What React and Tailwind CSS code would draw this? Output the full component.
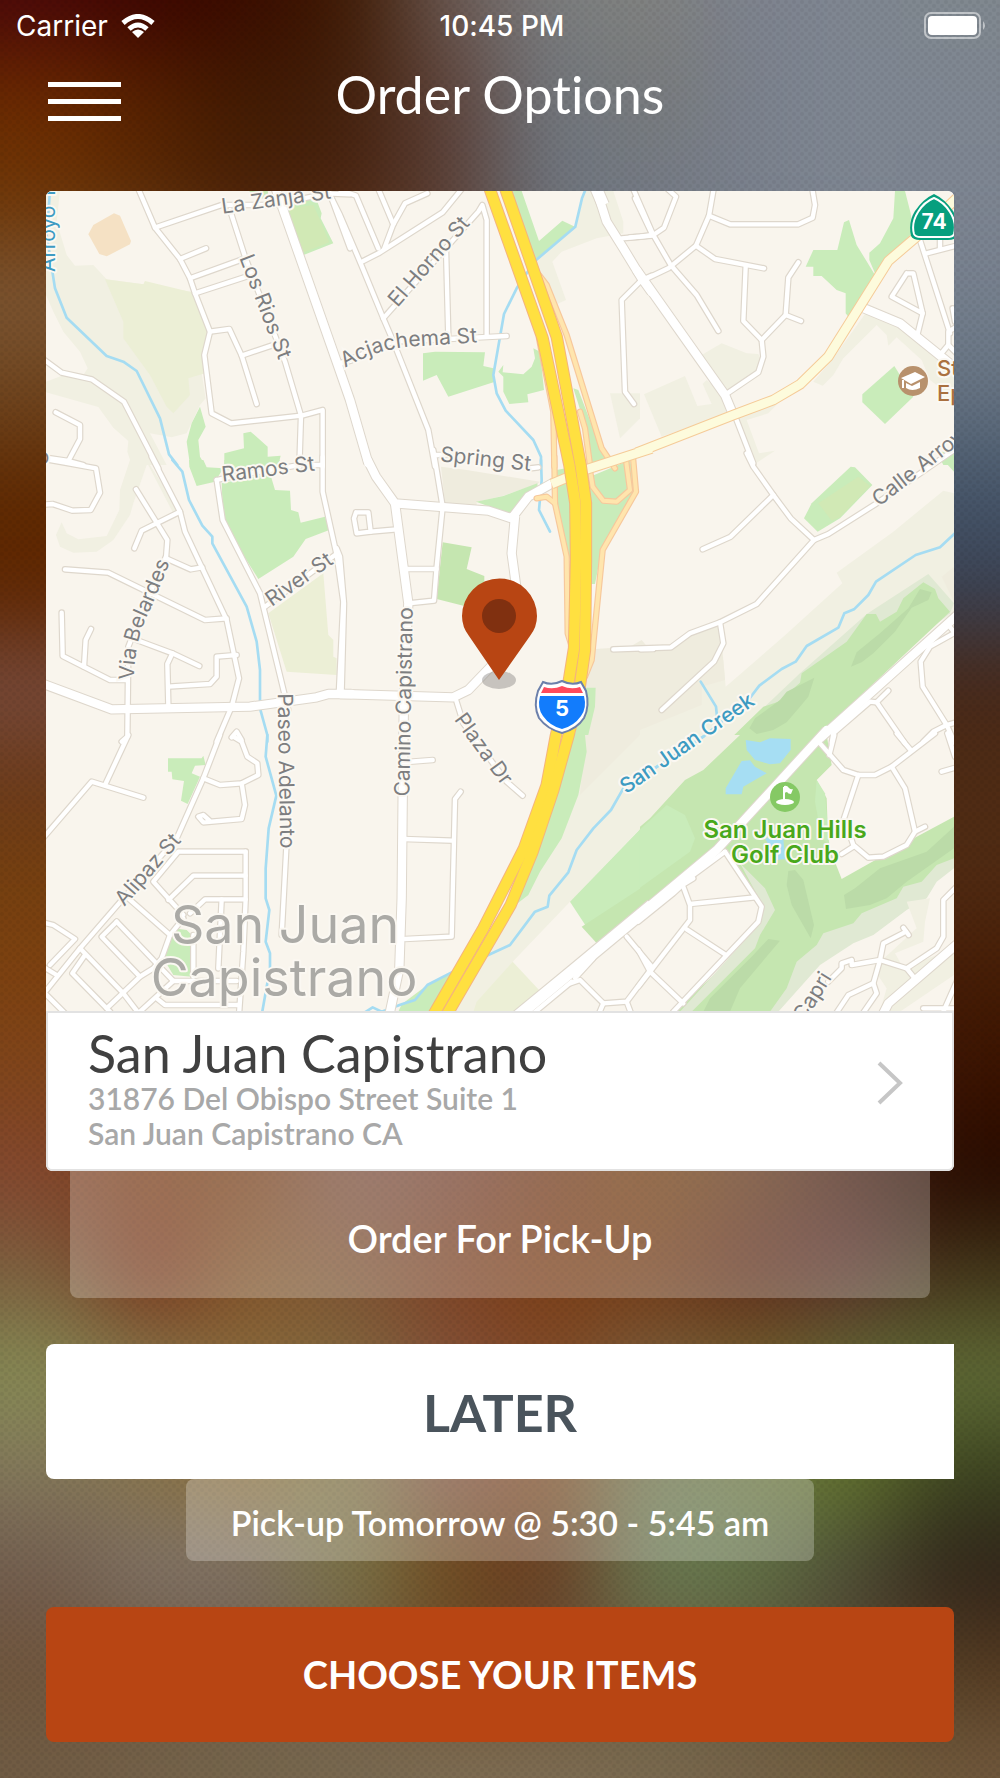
import React from "react";

/* ---------- Blurred backdrop ---------- */

const BACKDROP = [
  ["#4a0708", "#3c0500", "#3a0c00", "#3f1a02", "#6c5a54", "#7c7e80", "#818380", "#7d828e", "#7f8792", "#80888f"],
  ["#6b2a00", "#552000", "#401a02", "#43200c", "#5f433a", "#72787f", "#78797a", "#7b828e", "#7f8792", "#7f8792"],
  ["#6f3606", "#5a2a04", "#4a2006", "#4a2410", "#5a4038", "#6f7680", "#757b86", "#7b828e", "#7f8792", "#7e8692"],
  ["#7c5634", "#7c5634", "#6a4020", "#6a4020", "#6a4838", "#6f6f70", "#6f7680", "#6f7680", "#76808e", "#76808e"],
  ["#6f451f", "#6f451f", "#6a4020", "#6a4020", "#6a4020", "#6a4020", "#6a7482", "#6a7482", "#667382", "#667382"],
  ["#5f2a02", "#5f2a02", "#5f2a02", "#5f2a02", "#5f2a02", "#5f2a02", "#4e6070", "#4e6070", "#46566a", "#46566a"],
  ["#5f2600", "#5f2600", "#5f2600", "#5f2600", "#5f2600", "#5f2600", "#38343c", "#38343c", "#3a4254", "#3a4254"],
  ["#774a3c", "#774a3c", "#774a3c", "#6a3010", "#6a3010", "#6a3010", "#4a2814", "#4a2814", "#482818", "#482818"],
  ["#6b3a1a", "#6b3a1a", "#6b3a1a", "#6a3010", "#6a3010", "#6a3010", "#4c2a14", "#4c2a14", "#4f2c14", "#4f2c14"],
  ["#76400f", "#76400f", "#76400f", "#76400f", "#76400f", "#76400f", "#552f14", "#552f14", "#552f14", "#502a12"],
  ["#7d4110", "#7d4110", "#7d4110", "#7d4110", "#76400f", "#76400f", "#6f3c12", "#603010", "#4a2010", "#451c04"],
  ["#80451c", "#7d4418", "#7a4018", "#7d4b38", "#7a4630", "#773f1a", "#733d15", "#6a3a18", "#4c2418", "#3a1200"],
  ["#844730", "#7a3e18", "#7a421c", "#7d5444", "#784534", "#743a1c", "#74400f", "#64381a", "#452012", "#260a00"],
  ["#7c6040", "#7c341c", "#84582c", "#805535", "#7e4424", "#7c3e15", "#753c18", "#602c1c", "#5c302c", "#43361a"],
  ["#868c54", "#85784c", "#8a6a3c", "#7f6a40", "#84503c", "#804a28", "#7a6040", "#74602c", "#606c34", "#626e38"],
  ["#84785c", "#8a744c", "#8c7038", "#80784a", "#805040", "#804c20", "#6c7850", "#6c7844", "#64762c", "#3c4420"],
  ["#725e50", "#80746a", "#80746a", "#7a7648", "#6e4a1c", "#683c24", "#6a7c56", "#627448", "#4c4c38", "#30241a"],
  ["#70553c", "#70583e", "#705c48", "#746048", "#6e4c2c", "#6a4a30", "#6a6040", "#60583c", "#584830", "#543a20"],
  ["#705c44", "#74624a", "#76664c", "#786850", "#7e6e54", "#7e6e54", "#7a6a50", "#766248", "#74603f", "#70583c"],
];

function Backdrop() {
  const rowHeight = 98;
  const cells = [];
  for (let r = -1; r <= BACKDROP.length; r++) {
    for (let c = -1; c <= 10; c++) {
      const row = BACKDROP[Math.min(Math.max(r, 0), BACKDROP.length - 1)];
      cells.push(
        <rect key={`${r}:${c}`} x={c * 100} y={r * rowHeight - 49} width="101" height={rowHeight + 1} fill={row[Math.min(Math.max(c, 0), 9)]} />
      );
    }
  }
  return (
    <svg className="absolute inset-0 h-full w-full" viewBox="0 0 1000 1778" preserveAspectRatio="none" aria-hidden="true">
      <defs>
        <filter id="soften" x="-10%" y="-10%" width="120%" height="120%" colorInterpolationFilters="sRGB">
          <feGaussianBlur stdDeviation="45" />
        </filter>
        <pattern id="weave" width="8" height="8" patternUnits="userSpaceOnUse">
          <circle cx="2" cy="2" r="2" fill="#000" opacity="0.05" />
          <circle cx="6" cy="6" r="2" fill="#000" opacity="0.05" />
        </pattern>
      </defs>
      <g filter="url(#soften)">{cells}</g>
      <rect width="1000" height="1778" fill="url(#weave)" />
    </svg>
  );
}

/* ---------- Map data: nine tiles, each in its own units, three units to a pixel ---------- */

const LAND = "#f9f5ed";
const SCRUB = "#f1f0e2";
const SAND = "#efecde";
const OLIVE = "#ecefd6";
const GRASS = "#c9ecba";
const PARK = "#c5e6b0";
const FIELD = "#d1e9b5";
const HILL = "#bbdba8";
const SAGE = "#e0e9d3";
const POND = "#a6def3";

const TILES = [
  {
    x: 40, y: 185,
    areas: [
      [SCRUB, "60,18 50,110 80,210 105,242 160,240 200,283 310,298 455,320 505,440 485,565 497,640 480,660 440,745 395,757 330,745 380,840 275,840 262,800 265,768 220,728 175,666 18,622 18,590 66,572 130,570 143,550 120,500 70,440 40,380 18,330 18,18"],
      [OLIVE, "195,283 310,298 315,288 455,322 505,440 490,510 495,565 445,580 450,630 400,685 380,665 330,570 250,460 250,410"],
      ["#f5e1c4", "160,120 222,85 240,92 273,168 270,178 200,214 178,207 145,148"],
      [GRASS, "628,18 683,18 688,45 640,35"],
      [GRASS, "730,45 830,45 845,85 842,100 880,175 785,212"],
      [FIELD, "745,70 820,60 838,100 868,172 788,203"],
      [GRASS, "480,665 497,725 475,765 480,815 495,840 450,840 440,770 455,715"],
      [GRASS, "610,745 632,740 683,785 683,815 722,812 715,840 553,840 553,805 612,790"],
    ],
    water: ["30,18 20,150 45,310 80,398 200,513 250,530 290,558 360,700 387,808 412,840"],
    minor: [
      "290,0 345,128 420,222 450,280 465,325 510,440 493,510 515,685 573,715 785,692 848,675 848,845",
      "345,128 545,60 700,60 860,25 930,28", "420,222 498,190", "450,280 610,222", "465,325 640,268",
      "570,75 615,215 735,530 783,692 778,845", "510,440 568,432 605,512 650,657", "605,512 700,480",
      "0,515 65,563 155,583 252,650 355,850", "47,682 120,720 120,762 85,828", "0,815 85,828 130,840",
      "860,0 930,190", "890,540 935,526",
    ],
    major: ["700,-10 890,530 930,645 985,835"],
  },
  {
    x: 340, y: 185,
    areas: [
      [SCRUB, "735,18 820,18 850,110 850,145 770,160 665,200 637,230 678,345 645,360 600,280 585,228 708,127"],
      [GRASS, "515,18 545,18 597,168 667,107 708,127 585,228 560,170"],
      [GRASS, "249,505 285,500 435,502 430,543 460,550 465,590 325,635 290,570 249,587"],
      [GRASS, "475,560 490,540 488,562 550,568 575,545 585,520 580,490 600,500 612,615 562,628 565,652 508,657 490,620 490,575"],
      [GRASS, "700,610 715,615 790,810 800,830 750,840 735,720"],
    ],
    water: ["738,10 726,40 706,125 585,228 560,265 530,310 492,387 460,570 470,625 497,677 580,765 603,815 603,845"],
    minor: [
      "-30,30 0,90 62,235 130,400 160,470 265,735 285,845", "0,15 48,32 115,190", "110,0 160,118", "262,25 195,55 160,118 133,190",
      "375,0 308,82 115,205 62,232", "130,400 415,80 427,60 440,105 440,455", "318,190 325,455",
      "0,535 160,470 325,462 500,453", "285,810 320,810", "885,40 935,145", "845,160 935,152",
      "905,285 845,345 855,620 882,657", "905,285 935,272",
    ],
    major: ["765,0 800,110 850,190 905,280 935,322"],
    wide: ["760,-10 790,60"],
    ramps: ["597,270 620,300 680,450 785,790 825,850", "720,680 735,730 750,840", "597,460 640,680 643,845"],
  },
  {
    x: 640, y: 185,
    areas: [
      [GRASS, "612,112 627,105 650,180 705,270 625,395 617,385 617,325 590,315 545,273 520,273 520,245 497,245 520,195 592,195"],
      [GRASS, "765,18 795,18 812,85 820,140 740,225 705,265 688,225 688,203 720,175 760,100"],
      [SCRUB, "185,510 245,475 320,505 355,507 370,540 350,570 262,625"],
      [SCRUB, "12,628 135,573 172,663 215,657 188,597 200,585 262,640 275,680 65,755"],
      [SCRUB, "520,590 548,602 580,570 610,520 710,420 740,450 745,482 770,457 845,525 870,585 942,640 942,560 780,420 680,380 580,520"],
      [SCRUB, "320,705 385,685 430,640 290,680 320,790 340,840 405,797 357,805"],
      [GRASS, "667,628 763,543 820,635 735,717 667,652"],
      [SCRUB, "-90,625 0,625 0,700 -60,760"],
      [GRASS, "890,800 942,800 942,840 910,840"],
    ],
    minor: [
      "70,0 108,35 72,128 40,150 0,155 -30,157", "-30,-10 40,150 92,240 170,330 235,438",
      "0,290 85,250 168,182 207,92 223,0", "207,92 270,118 475,118 518,98 525,60 515,0",
      "168,182 225,222 372,250", "317,245 310,408 365,465 370,515 355,562 262,625", "365,465 437,390 445,278 475,232", "437,390 483,408",
      "280,680 340,835", "840,165 930,445", "860,205 950,182", "900,190 900,155", "800,265 820,265 848,385 755,335 800,265", "848,385 832,450",
      "900,510 925,480 925,440 950,425", "925,480 950,505", "938,370 945,410",
    ],
    major: ["-10,255 195,545 255,630 278,685", "672,370 780,415 960,560"],
    cream: ["-10,803 280,690 400,645 480,598 565,515 745,228 830,155 960,30"],
  },
  {
    x: 40, y: 460,
    areas: [
      [SCRUB, "270,0 320,0 420,155 400,160 322,10 280,130 270,165 220,240 170,275 100,278 60,260 48,225 65,187 80,220 115,238 200,228 238,150 240,90"],
      [GRASS, "447,0 490,0 500,22 550,25 525,65 470,78 448,20"],
      [GRASS, "553,0 720,0 690,35 553,30"],
      [GRASS, "545,70 690,40 705,90 750,92 753,150 775,157 782,188 855,170 868,210 797,237 760,290 655,357 550,190"],
      [OLIVE, "685,460 850,340 865,525 880,540 880,590 890,595 890,645 740,635"],
    ],
    water: ["397,0 427,35 447,120 487,197 517,230 517,250 620,440 650,545 660,630 660,745 682,825 682,845"],
    minor: [
      "0,-5 75,8 168,25 180,98 152,150 97,152 38,132 0,135", "335,-10 420,155 435,215 560,480 597,655 575,740 530,845",
      "288,88 350,188 382,240 378,295 452,328 487,322", "420,155 305,212 283,265", "378,290 300,470 265,560 262,830 245,845",
      "75,328 205,338 495,480 560,475", "65,458 68,588 210,660 262,660", "153,507 137,540 132,620",
      "290,540 397,580 478,618", "397,580 382,612 385,735", "385,680 510,672 530,650 530,590 590,585",
      "530,60 548,180 660,400 745,750", "530,60 600,45 780,15 848,15", "675,440 885,285", "848,-10 848,95 890,285 910,425 897,690",
      "575,832 590,815 605,840",
    ],
    major: ["0,668 215,748 630,740 830,712 865,702 935,702"],
  },
  {
    x: 340, y: 460,
    areas: [
      [SAND, "303,20 380,30 600,65 592,72 490,107 410,126 410,140 315,130"],
      [GRASS, "408,125 490,108 592,70 595,95 550,130 520,168 450,140"],
      [PARK, "308,247 395,262 380,327 433,348 433,440 370,437 290,417"],
      [GRASS, "650,130 650,30 700,20 692,305 660,200"],
      [GRASS, "750,50 870,0 890,95 785,270 765,372 750,372"],
      [SAND, "765,567 870,560 905,540 930,570 930,845 740,845 735,650"],
      [GRASS, "735,683 767,683 765,740 740,845 700,845"],
    ],
    water: ["603,0 605,60 597,150 630,215"],
    minor: [
      "280,-30 308,140 290,320 282,422 205,430", "200,327 290,327", "48,157 85,157 92,215 50,220 42,175 48,157", "92,215 170,208",
      "-10,265 0,290 12,430 5,690", "902,568 940,567", "570,25 595,22", "345,710 370,790 500,965 548,1007",
    ],
    major: ["83,0 108,50 165,130 445,152 515,175 565,110 640,68", "525,170 515,280 530,390", "165,130 205,430 198,560 192,700", "0,702 340,712 385,690 460,612"],
    ramps: [
      "643,-10 645,130 680,290 683,520 700,575", "590,115 620,110 645,130", "878,-20 888,95 788,270 755,600 735,650",
      "748,20 758,80 790,122 830,125 870,90 858,0",
    ],
    cream: ["635,72 740,28 935,-35"],
  },
  {
    x: 640, y: 460,
    areas: [
      [SCRUB, "942,100 910,92 760,215 590,338 607,370 430,530 350,600 257,680 250,600 100,567 0,570 0,845 270,845 942,460"],
      [SAND, "0,570 95,570 150,525 240,490 255,660 185,680 185,735 0,810"],
      [SAND, "905,350 942,320 942,425"],
      [SAGE, "865,342 942,430 930,460 700,640 360,800 300,810 480,640 680,462"],
      [PARK, "262,845 370,740 415,725 480,668 485,640 620,545 680,462 708,462 720,485 770,455 790,415 850,367 885,387 895,415 930,455 515,845"],
      [HILL, "840,387 875,397 865,420 815,443 765,515 700,580 665,607 633,620 650,577 720,520 805,445"],
      [HILL, "523,653 505,710 480,740 440,787 400,810 350,822 328,805 345,775 420,720 440,695"],
      [GRASS, "632,20 645,22 697,75 600,175 533,215 492,175 515,130"],
      [FIELD, "655,50 690,78 600,172 575,182 535,130"],
      [GRASS, "910,0 942,0 942,35"],
    ],
    water: ["950,215 900,262 827,285 708,365 685,405 642,448 613,460 595,503 500,558 467,605 425,627 358,677 325,720 190,830 -50,985", "182,665 228,740 232,780"],
    minor: [
      "320,-20 340,20 400,105 452,175 522,240 350,432 240,487 150,520 93,562 -80,568", "400,105 272,230 188,268", "522,240 565,222 710,130 942,-30",
      "240,487 250,550 222,605 65,750", "950,515 870,560 842,605 848,680 920,795 945,850", "745,692 710,727 690,725 580,820 575,850",
      "710,727 795,850", "950,787 920,795 880,815 850,845", "925,495 945,520",
    ],
    major: ["960,458 540,835"],
  },
  {
    x: 40, y: 735,
    areas: [
      [GRASS, "384,70 485,70 490,62 497,90 465,92 455,115 480,125 443,207 423,197 432,138 397,133 395,110 384,110"],
      [GRASS, "370,670 390,610 400,580 440,585 455,600 455,725 400,720"],
    ],
    water: ["682,0 677,65 709,182 686,280 677,400 677,490 688,525 677,620 690,655 690,700 665,840"],
    minor: [
      "265,0 195,150", "0,320 155,140 310,188", "540,0 490,130 410,310 250,490 120,640 0,790",
      "490,130 540,150 605,145 655,120 652,85 622,65 605,20 580,5", "605,145 615,210 605,252 490,262 475,245 490,240 510,258",
      "617,350 415,350 340,440 430,540", "385,495 460,422 617,422", "617,350 617,493 610,650 597,840", "617,493 495,493 450,535",
      "545,493 535,700", "265,490 390,600 430,550", "390,600 365,670 340,700 300,725 200,820", "460,600 460,725", "400,738 590,738",
      "120,640 250,775 300,840", "230,560 185,605 300,725", "230,560 400,738 300,830", "135,660 97,715 210,830", "350,790 375,810 597,810",
      "0,560 40,570 105,612 30,690", "0,690 50,720", "10,770 80,840", "740,320 725,600",
    ],
  },
  {
    x: 340, y: 735,
    areas: [
      [SCRUB, "720,0 930,0 930,250 690,500 518,680 400,830 330,830 500,540"],
      [SAND, "735,0 900,0 840,60 720,180"],
      [GRASS, "735,0 740,50 715,180 665,310 600,410 565,480 500,530 640,180 690,0"],
      [OLIVE, "518,680 600,768 530,830 400,830 410,800"],
      [GRASS, "932,250 690,500 775,630 932,495"],
      [PARK, "932,440 725,575 775,630 932,495"],
      [GRASS, "185,808 262,750 335,712 300,830 175,830"],
    ],
    water: ["850,160 813,225 760,280 710,345 685,412 628,482 623,515 585,530 510,630 445,660 335,712 262,750 225,795 185,808 125,830 98,817 70,835"],
    minor: [
      "200,81 278,75", "362,170 345,192 335,605 195,612", "190,312 335,317", "860,605 935,695",
      "690,745 720,735 790,805 860,800 935,700", "860,800 875,840", "790,805 775,840", "760,670 705,730", "695,740 580,835",
    ],
    major: ["192,-130 188,190 185,490 178,700 148,840"],
    wide: ["935,510 700,705 530,845"],
  },
  {
    x: 640, y: 735,
    areas: [
      [SCRUB, "-2,0 320,0 190,110 135,140 -2,285"],
      [PARK, "0,275 30,250 135,135 190,105 300,0 942,0 942,830 100,830 355,600 250,350 0,560"],
      [GRASS, "-2,285 80,210 135,240 165,310 150,350 -2,460"],
      [LAND, "560,0 575,90 530,135 560,190 565,330 605,432 830,305 942,245 942,0"],
      [GRASS, "530,135 555,175 568,330 545,310 525,200"],
      [LAND, "-2,560 255,350 360,520 355,560 110,830 -2,830"],
      [SAGE, "300,385 375,460 405,525 360,600 345,640 155,830 120,830 365,560 368,510"],
      [SAGE, "942,370 890,390 845,440 790,455 770,490 665,535 640,565 550,595 530,630 470,680 440,760 390,830 480,830 942,500"],
      [LAND, "942,400 890,440 860,490 800,525 700,600 640,625 540,690 415,830 942,830"],
      [SCRUB, "800,500 870,490 855,560 850,620 765,655 790,700 942,640 942,720 780,830 720,830 740,760 700,700 830,580"],
      [HILL, "612,480 645,460 720,400 860,350 942,275 942,340 800,440 740,490 690,510 618,522"],
      [HILL, "445,408 465,405 490,435 522,570 512,610 455,510 440,450"],
      [HILL, "385,612 420,617 300,760 270,830 190,830 210,790 340,660"],
      [POND, "317,15 360,22 390,10 452,12 452,45 420,85 390,88 345,75 320,45"],
      [POND, "305,78 330,76 345,95 380,115 310,155 305,178 257,178 257,160"],
      [POND, "375,310 430,310 435,372 410,375"],
    ],
    water: ["190,5 75,80 -50,160"],
    minor: [
      "540,25 575,65 610,105 655,120 705,120 755,95 885,-5", "583,0 568,60", "770,-5 812,45", "922,-5 945,65",
      "755,95 795,160 825,290 800,330 730,365 685,368 640,330 612,250 655,120", "855,275 825,290", "605,357 640,335", "905,110 950,97",
      "255,350 160,420 100,475 -5,560", "160,430 128,450 150,510 150,555 30,710 -5,755", "150,507 345,487", "255,350 365,515 355,560 100,830",
      "140,583 258,660", "-5,645 30,710 130,805", "565,740 605,700 605,685 635,675 635,690 720,675 800,700 890,640 910,605 910,495 950,455",
      "800,700 820,725", "720,675 730,625 798,590", "790,578 806,600", "720,675 700,745 710,775 665,840", "700,745 625,780 585,840",
      "950,740 910,830", "850,820 942,820",
    ],
    major: ["560,-15 230,345 -10,545", "960,620 745,805 725,845"],
  },
];

const FREEWAY = [
  "445,0 608,460 688,840 706,955 708,1125 702,1390 682,1515 648,1650 620,1800 552,1990 430,2230 280,2490",
  "492,0 650,455 722,840 738,955 738,1125 735,1395 718,1515 686,1650 640,1815 578,2000 512,2160 320,2490",
];

function Layer({ kind, stroke, width, cap = "round" }) {
  return TILES.map((t) => (
    <g key={`${t.x}-${t.y}`} transform={`translate(${t.x} ${t.y}) scale(0.33333)`} fill="none" stroke={stroke} strokeWidth={width} strokeLinejoin="round" strokeLinecap={cap}>
      {(t[kind] || []).map((p) => <polyline key={p} points={p} />)}
    </g>
  ));
}

function Label({ x, y, turn = 0, children, fill = "#7d7e80", size = 21, weight = 400, anchor = "middle", halo = "#fbf8f2" }) {
  return (
    <text transform={`translate(${x} ${y}) rotate(${turn})`} textAnchor={anchor} fontSize={size} fontWeight={weight} fill={fill} stroke={halo} strokeWidth="4" strokeLinejoin="round" paintOrder="stroke">
      {children}
    </text>
  );
}

function StreetMap() {
  return (
    <svg className="block w-full rounded-t-md font-['Inter',sans-serif]" viewBox="46 191 908 820" role="img" aria-label="Map of San Juan Capistrano">
      <rect x="46" y="191" width="908" height="820" fill={LAND} />
      {TILES.map((t) => (
        <g key={`${t.x}-${t.y}`} transform={`translate(${t.x} ${t.y}) scale(0.33333)`}>
          {t.areas.map(([fill, pts]) => <polygon key={pts} points={pts} fill={fill} />)}
        </g>
      ))}
      <Layer kind="water" stroke="#a5dcf2" width="8" />
      <Layer kind="minor" stroke="#ded7cc" width="20" />
      <Layer kind="major" stroke="#ded7cc" width="31" cap="butt" />
      <Layer kind="wide" stroke="#ded7cc" width="40" cap="butt" />
      <Layer kind="minor" stroke="#fff" width="13" />
      <Layer kind="major" stroke="#fff" width="25" />
      <Layer kind="wide" stroke="#fff" width="34" cap="butt" />
      <Layer kind="ramps" stroke="#f7c89c" width="19" />
      <Layer kind="ramps" stroke="#ffe5ad" width="12" />
      <Layer kind="cream" stroke="#f5cb98" width="32" cap="butt" />
      <Layer kind="cream" stroke="#fdfbdc" width="26" cap="butt" />
      <g transform="translate(340 185) scale(0.33333)" fill="none" strokeLinejoin="round">
        {FREEWAY.map((p) => <polyline key={p} points={p} stroke="#f5b47c" strokeWidth="37" />)}
        {FREEWAY.map((p) => <polyline key={p} points={p} stroke="#ffe040" strokeWidth="31" />)}
      </g>

      {/* Street names */}
      <defs>
        <path id="acjachema" d="M345 368 Q380 347 420 346 L500 341" />
        <path id="belardes" d="M134 680 Q134 640 151 608 L177 545" />
      </defs>
      <Label x={277} y={206} turn={-8}>La Zanja St</Label>
      <Label x={259} y={309} turn={69}>Los Rios St</Label>
      <Label x={434} y={266} turn={-49}>El Horno St</Label>
      <text fontSize="21" fill="#7d7e80" stroke="#fbf8f2" strokeWidth="4" paintOrder="stroke"><textPath href="#acjachema">Acjachema St</textPath></text>
      <text fontSize="21" fill="#7d7e80" stroke="#fbf8f2" strokeWidth="4" paintOrder="stroke"><textPath href="#belardes">Via Belardes</textPath></text>
      <Label x={485} y={466} turn={6}>Spring St</Label>
      <Label x={269} y={476} turn={-7}>Ramos St</Label>
      <Label x={303} y={585} turn={-35}>River St</Label>
      <Label x={279} y={771} turn={89}>Paseo Adelanto</Label>
      <Label x={411} y={702} turn={-89}>Camino Capistrano</Label>
      <Label x={478} y={753} turn={54}>Plaza Dr</Label>
      <Label x={153} y={874} turn={-49}>Alipaz St</Label>
      <Label x={879} y={507} turn={-38} anchor="start">Calle Arroyo</Label>
      <Label x={804} y={1023} turn={-58} anchor="start">Capri</Label>
      <Label x={43} y={464}>o</Label>
      <Label x={55} y={272} turn={-90} anchor="start" fill="#3d9bc2">Arroyo T</Label>
      <Label x={691} y={749} turn={-35} fill="#3d9bc2" weight={500}>San Juan Creek</Label>

      {/* City */}
      <Label x={285} y={943} size={52} fill="#abaaa6">San Juan</Label>
      <Label x={284} y={996} size={52} fill="#abaaa6">Capistrano</Label>

      {/* School */}
      <circle cx="913" cy="381" r="15" fill="#b8916c" />
      <path d="M901 378 L915 372 L925 377 L911 384 Z M906 383 L912 386 L920 382 L920 388 Q912 392 906 388 Z" fill="#fff" />
      <path d="M903 380 V388" stroke="#fff" strokeWidth="2" />
      <Label x={937} y={376} anchor="start" size={22} weight={500} fill="#aa7040">St</Label>
      <Label x={937} y={401} anchor="start" size={22} weight={500} fill="#aa7040">Epis</Label>

      {/* Golf club */}
      <circle cx="785" cy="797" r="15" fill="#85c964" />
      <ellipse cx="785" cy="802" rx="9" ry="3" fill="#fff" />
      <path d="M784 802 V787" stroke="#fff" strokeWidth="2" />
      <path d="M784 786 Q787 785 789 788 Q791 790 793 789 L791 794 Q788 794 787 792 L784 793 Z" fill="#fff" />
      <Label x={785} y={838} size={24} weight={600} fill="#49a81b">San Juan Hills</Label>
      <Label x={785} y={863} size={24} weight={600} fill="#49a81b">Golf Club</Label>

      {/* Route 74 */}
      <path d="M934 194 Q945 199 953 211 Q960 222 957 236 Q955 240 948 240 H920 Q913 240 911 236 Q908 222 915 211 Q923 199 934 194 Z" fill="#079f7e" />
      <path d="M934 198 Q944 202 950 212 Q957 223 954 234 Q953 237 947 237 H921 Q915 237 914 234 Q911 223 918 212 Q924 202 934 198 Z" fill="none" stroke="#fff" strokeWidth="2" />
      <text x="934" y="229" textAnchor="middle" fontSize="21" fontWeight="700" fill="#fff">74</text>

      {/* Interstate 5 */}
      <path d="M543 682 Q552 686 562 681 Q572 686 581 682 L586 691 Q590 706 584 718 Q577 729 562 733 Q547 729 539 718 Q533 706 538 691 Z" fill="#fff" stroke="#6c80ab" strokeWidth="2" />
      <path d="M544 687 Q553 690 562 686 Q571 690 580 687 L583 693 H541 Z" fill="#ff4a5c" />
      <path d="M540 696 H584 Q587 708 581 716 Q574 726 562 729 Q550 726 543 716 Q537 708 540 696 Z" fill="#127cfc" />
      <text x="562" y="716" textAnchor="middle" fontSize="22" fontWeight="700" fill="#fff">5</text>

      {/* Location pin */}
      <ellipse cx="499" cy="680" rx="17" ry="9" fill="#8a8784" opacity="0.45" />
      <path d="M499 680 L469 636 Q462 627 462 616 A37.500 37.500 0 0 1 537 616 Q537 627 530 636 Z" fill="#b84513" />
      <circle cx="499" cy="616" r="17" fill="#803010" />
    </svg>
  );
}

/* ---------- Page ---------- */

function StatusBar() {
  return (
    <div className="grid h-12 grid-cols-3 items-center pr-3 pl-4 pt-1 font-['Inter',sans-serif] text-[28px] leading-none">
      <div className="flex items-center gap-3">
        <span>Carrier</span>
        <svg className="h-6 w-9" viewBox="0 0 36 24" fill="none" stroke="#fff" strokeWidth="5" aria-label="Wi-Fi">
          <path d="M3 9 Q18 -4 33 9" />
          <path d="M9 15 Q18 7 27 15" />
          <path d="M12 18 Q18 13 24 18 L18 24 Z" fill="#fff" stroke="none" />
        </svg>
      </div>
      <div className="text-center font-medium">10:45 PM</div>
      <svg className="h-7 w-[65px] justify-self-end" viewBox="0 0 65 28" aria-label="Battery full">
        <rect x="2" y="1" width="55" height="25" rx="6" fill="none" stroke="#fff" strokeOpacity="0.5" strokeWidth="2" />
        <rect x="5" y="4" width="49" height="19" rx="4" fill="#fff" />
        <path d="M60 9 Q64 13.500 60 18 Z" fill="#fff" fillOpacity="0.5" />
      </svg>
    </div>
  );
}

export default function App() {
  return (
    <div className="relative min-h-screen overflow-hidden bg-[#5f3a1c] font-['Lato',sans-serif] text-white [font-variant-ligatures:none]">
      <Backdrop />
      <div className="relative">
        <StatusBar />
        <header className="grid h-[143px] grid-cols-[120px_1fr_120px] items-start px-12">
          <button type="button" aria-label="Menu" className="mt-[34px] flex w-[73px] flex-col gap-3">
            <span className="h-[5px] w-full bg-white" />
            <span className="h-[5px] w-full bg-white" />
            <span className="h-[5px] w-full bg-white" />
          </button>
          <h1 className="mt-2 text-center text-[52px] leading-[76px]">Order Options</h1>
        </header>

        <main className="px-[46px] pb-9">
          <section className="overflow-hidden rounded-md bg-white">
            <StreetMap />
            <button type="button" className="flex w-full items-start justify-between rounded-b-md border-2 border-[#e2e2e2] px-10 pt-3 pb-4.5 text-left">
              <span className="block">
                <span className="block text-[52px] leading-[56px] text-[#404040]">San Juan Capistrano</span>
                <span className="block text-[30px] leading-[35px] font-semibold text-[#a8a8a8]">31876 Del Obispo Street Suite 1</span>
                <span className="block text-[30px] leading-[35px] font-semibold text-[#a8a8a8]">San Juan Capistrano CA</span>
              </span>
              <svg className="mt-9 mr-2 h-11 w-7" viewBox="0 0 28 44" fill="none" stroke="#c6c6c6" strokeWidth="4" aria-hidden="true">
                <path d="M3 2 L24 22 L3 42" />
              </svg>
            </button>
          </section>

          <button type="button" className="mx-auto block h-[127px] w-[calc(100%-48px)] rounded-b-lg bg-white/25 pt-2 text-[38px] font-semibold">
            Order For Pick-Up
          </button>

          <button type="button" className="mt-[46px] block h-[135px] w-full rounded-l-lg bg-white text-[52px] font-bold text-[#4a545c]">
            LATER
          </button>
          <div className="mx-auto flex h-[82px] w-[628px] max-w-full items-center justify-center rounded-lg bg-white/25 pt-1 text-[34px] font-semibold">
            Pick-up Tomorrow @ 5:30 - 5:45 am
          </div>

          <button type="button" className="mt-[46px] block h-[135px] w-full rounded-lg bg-[#b84513] text-[38px] font-bold">
            CHOOSE YOUR ITEMS
          </button>
        </main>
      </div>
    </div>
  );
}
